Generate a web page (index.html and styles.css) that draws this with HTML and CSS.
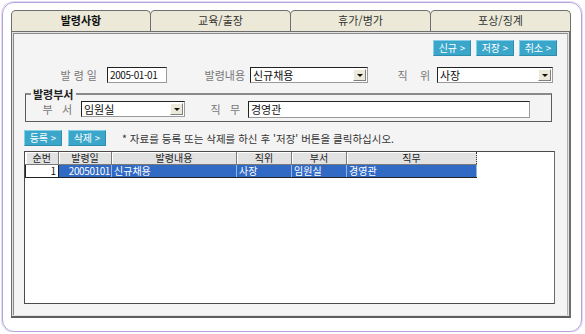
FILE: index.html
```html
<!DOCTYPE html>
<html lang="ko">
<head>
    <meta charset="UTF-8">
    <title>발령사항</title>
    <link rel="stylesheet" href="styles.css">
</head>
<body>
    <div class="frame">
        <div class="tabs">
            <div class="tab active">발령사항</div>
            <div class="tab">교육/출장</div>
            <div class="tab">휴가/병가</div>
            <div class="tab">포상/징계</div>
        </div>

        <div class="panel">
            <div class="panel-inner">
                <div class="toolbar">
                    <button class="btn">신규 &gt;</button>
                    <button class="btn">저장 &gt;</button>
                    <button class="btn">취소 &gt;</button>
                </div>

                <div class="form-row main-row">
                    <span class="lbl lbl-date">발 령 일</span>
                    <div class="field field-date">2005-01-01</div>
                    <span class="lbl lbl-kind">발령내용</span>
                    <div class="field select select-kind">신규채용<span class="arrow"></span></div>
                    <span class="lbl lbl-rank">직&nbsp;&nbsp;&nbsp;&nbsp;위</span>
                    <div class="field select select-rank">사장<span class="arrow"></span></div>
                </div>

                <fieldset class="group">
                    <legend>발령부서</legend>
                    <div class="form-row">
                        <span class="lbl lbl-dept">부&nbsp;&nbsp;&nbsp;서</span>
                        <div class="field select select-dept">임원실<span class="arrow"></span></div>
                        <span class="lbl lbl-duty">직&nbsp;&nbsp;&nbsp;무</span>
                        <div class="field field-duty">경영관</div>
                    </div>
                </fieldset>

                <div class="actions">
                    <button class="btn">등록 &gt;</button>
                    <button class="btn">삭제 &gt;</button>
                    <span class="note">* 자료를 등록 또는 삭제를 하신 후 '저장' 버튼을 클릭하십시오.</span>
                </div>

                <div class="grid">
                    <table>
                        <thead>
                            <tr>
                                <th class="c-no">순번</th>
                                <th class="c-date">발령일</th>
                                <th class="c-kind">발령내용</th>
                                <th class="c-rank">직위</th>
                                <th class="c-dept">부서</th>
                                <th class="c-duty">직무</th>
                            </tr>
                        </thead>
                        <tbody>
                            <tr class="selected">
                                <td class="c-no">1</td>
                                <td class="c-date">20050101</td>
                                <td>신규채용</td>
                                <td>사장</td>
                                <td>임원실</td>
                                <td>경영관</td>
                            </tr>
                        </tbody>
                    </table>
                </div>
            </div>
        </div>
    </div>
</body>
</html>
```

FILE: styles.css
```css
* {
    box-sizing: border-box;
    margin: 0;
    padding: 0;
}

body {
    font-family: "Noto Sans CJK KR", "Noto Sans", sans-serif;
    font-size: 11px;
    color: #222;
    background: #fff;
}

.frame {
    margin: 2px 0 0 2px;
    width: 580px;
    height: 330px;
    border: 1px solid #b4a3db;
    border-radius: 12px;
    box-shadow: 0 0 0 1px #e4dcf3;
    padding: 7px 0 0 8px;
}

/* tabs */
.tabs {
    display: flex;
    width: 560px;
    height: 21px;
}

.tab {
    width: 140px;
    height: 21px;
    line-height: 19px;
    text-align: center;
    background: #ece9d8;
    border: 1px solid #6f6f6f;
    border-bottom: none;
    border-radius: 5px 5px 0 0;
    color: #333;
}

.tab + .tab {
    margin-left: -1px;
    width: 141px;
}

.tab.active {
    font-weight: bold;
    color: #111;
}

/* panel */
.panel {
    width: 560px;
    height: 287px;
    border: 1px solid #6e6e6e;
    border-right-width: 2px;
    border-bottom-width: 2px;
    border-bottom-color: #5e5e5e;
    padding: 1px;
    background: #e2e2e2;
}

.panel-inner {
    height: 100%;
    background: #f4f4f4;
    border-left: 1px solid #8a8a8a;
    border-top: 1px solid #8a8a8a;
    border-right: 1px solid #b0b0b0;
    padding: 0 10px;
}

.toolbar {
    display: flex;
    justify-content: flex-end;
    gap: 5px;
    margin-top: 6px;
}

.btn {
    width: 38px;
    height: 16px;
    font-family: inherit;
    font-size: 10px;
    line-height: 14px;
    color: #fff;
    background: #3aa6ca;
    border: 1px solid #86cfe6;
    border-right-color: #2f8cac;
    border-bottom-color: #2f8cac;
    cursor: pointer;
}

/* form rows */
.form-row {
    display: flex;
    align-items: center;
    height: 16px;
}

.main-row {
    margin-top: 11px;
}

.lbl {
    text-align: right;
    color: #777;
    white-space: nowrap;
}

.lbl-date { width: 83px; padding-right: 10px; }
.lbl-kind { width: 83px; padding-right: 5px; }
.lbl-rank { width: 69px; padding-right: 7px; }
.lbl-dept { width: 55px; padding-right: 9px; }
.lbl-duty { width: 63px; padding-right: 8px; }

.field {
    position: relative;
    height: 16px;
    line-height: 14px;
    padding-left: 2px;
    background: #fff;
    color: #111;
    border: 1px solid #222;
    border-right-color: #9a9a9a;
    border-bottom-color: #9a9a9a;
    white-space: nowrap;
}

.field-date {
    width: 60px;
    font-size: 10px;
    letter-spacing: -0.4px;
}

.field-duty {
    width: 282px;
    height: 17px;
}

.select-kind { width: 118px; }
.select-rank { width: 116px; }
.select-dept { width: 104px; }

.arrow {
    position: absolute;
    top: 1px;
    right: 1px;
    width: 13px;
    height: 12px;
    background: #ece9d8;
    border: 1px solid #fff;
    border-right-color: #808080;
    border-bottom-color: #808080;
}

.arrow::after {
    content: "";
    position: absolute;
    left: 3px;
    top: 4px;
    border-left: 3px solid transparent;
    border-right: 3px solid transparent;
    border-top: 3px solid #111;
}

/* group box */
.group {
    margin: 5px 5px 0 1px;
    border: 1px solid #5a5a5a;
    border-top: 2px solid #8a8a8a;
    padding: 1px 0 4px 0;
}

.group legend {
    margin-left: 5px;
    padding: 0 3px 0 2px;
    font-weight: bold;
    color: #222;
    line-height: 12px;
}

/* actions */
.actions {
    display: flex;
    align-items: center;
    gap: 6px;
    margin-top: 8px;
    height: 16px;
}

.note {
    margin-left: 10px;
    color: #333;
    font-size: 10.5px;
}

/* grid */
.grid {
    margin-top: 5px;
    width: 531px;
    height: 153px;
    background: #fff;
    border: 1px solid #4a4a4a;
    border-right-color: #6a6a6a;
}

.grid table {
    border-collapse: collapse;
    table-layout: fixed;
    width: 451px;
}

.grid th,
.grid td {
    height: 12px;
    line-height: 12px;
    font-size: 10px;
    font-weight: normal;
    white-space: nowrap;
}

.grid th {
    background: #e2e2e2;
    color: #222;
    text-align: center;
    border-right: 1px solid #7a7a7a;
    border-bottom: 1px solid #7a7a7a;
    box-shadow: inset 1px 1px 0 #fff;
}

.grid th.c-duty {
    border-right: 1px dotted #333;
}

.c-no { width: 33px; }
.c-date { width: 53px; }
.c-kind { width: 125px; }
.c-rank { width: 55px; }
.c-dept { width: 55px; }
.c-duty { width: 130px; }

.grid td {
    padding: 0 2px;
    background: #316ac5;
    color: #fff;
    border-right: 1px solid #9ab4e0;
    border-bottom: 1px solid #222;
}

.grid td.c-no {
    background: #fff;
    color: #111;
    text-align: right;
    border: 1px solid #222;
}

.grid td.c-date {
    padding: 0 1px;
    text-align: right;
    letter-spacing: -0.4px;
}
```
